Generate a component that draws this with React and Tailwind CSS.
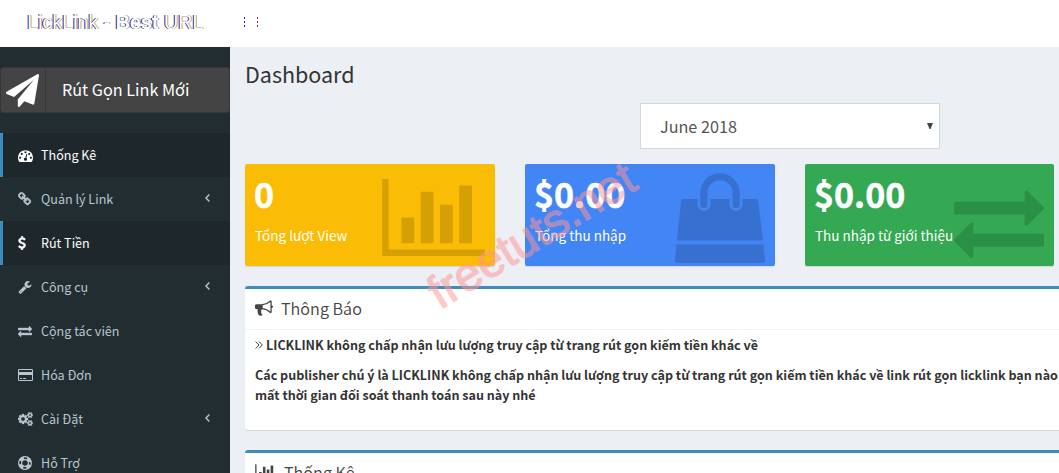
import React from "react";

const PLANE =
  "M1764 11q33 24 27 64l-256 1536q-5 29-32 45-14 8-31 8-11 0-24-5l-453-185-242 295q-18 23-49 23-13 0-22-4-19-7-30.5-23.5t-11.5-36.5v-349l864-1059-1069 925-395-162q-37-14-40-55-2-40 32-59l1664-960q15-9 32-9 20 0 36 11z";
const GAUGE =
  "M384 1152q0-53-37.5-90.5t-90.5-37.5-90.5 37.5-37.5 90.5 37.5 90.5 90.5 37.5 90.5-37.5 37.5-90.5zm192-448q0-53-37.5-90.5t-90.5-37.5-90.5 37.5-37.5 90.5 37.5 90.5 90.5 37.5 90.5-37.5 37.5-90.5zm428 481l101-382q6-26-7.5-48.5t-38.5-29.5-48 6.5-30 39.5l-101 382q-60 5-107 43.5t-63 98.5q-20 77 20 146t117 89 146-20 89-117q16-60-6-117t-72-91zm660-33q0-53-37.5-90.5t-90.5-37.5-90.5 37.5-37.5 90.5 37.5 90.5 90.5 37.5 90.5-37.5 37.5-90.5zm-640-640q0-53-37.5-90.5t-90.5-37.5-90.5 37.5-37.5 90.5 37.5 90.5 90.5 37.5 90.5-37.5 37.5-90.5zm448 192q0-53-37.5-90.5t-90.5-37.5-90.5 37.5-37.5 90.5 37.5 90.5 90.5 37.5 90.5-37.5 37.5-90.5zm320 448q0 261-141 483-19 29-54 29h-1402q-35 0-54-29-141-221-141-483 0-182 71-348t191-286 286-191 348-71 348 71 286 191 191 286 71 348z";
const CHAIN =
  "M1456 1216q0-40-28-68l-208-208q-28-28-68-28-42 0-72 32 3 3 19 18.5t21.5 21.5 15 19 13 25.5 3.5 27.5q0 40-28 68t-68 28q-15 0-27.5-3.5t-25.5-13-19-15-21.5-21.5-18.5-19q-33 31-33 73 0 40 28 68l206 207q27 27 68 27 40 0 68-26l147-146q28-28 28-67zm-703-705q0-40-28-68l-206-207q-28-28-68-28-39 0-68 27l-147 146q-28 28-28 67 0 40 28 68l208 208q27 27 68 27 42 0 72-31-3-3-19-18.5t-21.5-21.5-15-19-13-25.5-3.5-27.5q0-40 28-68t68-28q15 0 27.5 3.5t25.5 13 19 15 21.5 21.5 18.5 19q33-31 33-73zm895 705q0 120-85 203l-147 146q-83 83-203 83-121 0-204-85l-206-207q-83-83-83-203 0-123 88-209l-88-88q-86 88-208 88-120 0-204-84l-208-208q-84-84-84-204t85-203l147-146q83-83 203-83 121 0 204 85l206 207q83 83 83 203 0 123-88 209l88 88q86-88 208-88 120 0 204 84l208 208q84 84 84 204z";
const DOLLAR =
  "M1362 1185q0 153-99.5 263.5t-258.5 136.5v175q0 14-9 23t-23 9h-135q-13 0-22.5-9.5t-9.5-22.5v-175q-66-9-127.5-31t-101.5-44.5-74-48-46.5-37.5-17.5-18q-17-21-2-41l103-135q7-10 23-12 15-2 24 9l2 2q113 99 243 125 37 8 74 8 81 0 142.5-43t61.5-122q0-28-15-53t-33.5-42-58.5-37.5-66-32-80-32.5q-39-16-61.5-25t-61.5-26.5-62.5-31-56.5-35.5-53.5-42.5-43.5-49-35.5-58-21-66.5-8.5-78q0-138 98-242t255-134v-180q0-13 9.5-22.5t22.5-9.5h135q14 0 23 9t9 23v176q57 6 110.5 23t87 33.5 63.5 37.5 39 29 15 14q17 18 5 38l-81 146q-8 15-23 16-14 3-27-7-3-3-14.5-12t-39-26.5-58.5-32-74.5-26-85.5-11.5q-95 0-155 43t-60 111q0 26 8.500 48t29.500 41.500 39.500 33 56 31 60.500 27 70 27.500q53 20 81 31.500t76 35 75.500 42.500 62 50 53 63.500 31.500 76.500 13 94z";
const WRENCH =
  "M448 1472q0-26-19-45t-45-19-45 19-19 45 19 45 45 19 45-19 19-45zm644-420l-682 682q-37 37-90 37-52 0-91-37l-106-108q-38-36-38-90 0-53 38-91l681-681q39 98 114.5 173.5t173.5 114.5zm634-435q0 39-23 106-47 134-164.5 217.5t-258.5 83.5q-185 0-316.5-131.5t-131.5-316.5 131.5-316.5 316.5-131.5q58 0 121.500 16.500t107.500 46.500q16 11 16 28t-16 28l-293 169v224l193 107q5-3 79-48.500t135.500-81 70.500-35.500q15 0 23.500 10t8.500 25z";
const EXCHANGE =
  "M1792 1184v192q0 13-9.5 22.5t-22.5 9.5h-1376v192q0 13-9.5 22.5t-22.5 9.5q-12 0-24-10l-319-320q-9-9-9-22 0-14 9-23l320-320q9-9 23-9 13 0 22.5 9.5t9.5 22.5v192h1376q13 0 22.5 9.5t9.5 22.5zm0-544q0 14-9 23l-320 320q-9 9-23 9-13 0-22.5-9.5t-9.5-22.5v-192h-1376q-13 0-22.5-9.5t-9.5-22.5v-192q0-13 9.5-22.5t22.5-9.5h1376v-192q0-14 9-23t23-9q12 0 24 10l319 319q9 9 9 23z";
const COGS =
  "M896 896q0-106-75-181t-181-75-181 75-75 181 75 181 181 75 181-75 75-181zm768 512q0-52-38-90t-90-38-90 38-38 90q0 53 37.5 90.5t90.5 37.5 90.5-37.5 37.5-90.5zm0-1024q0-52-38-90t-90-38-90 38-38 90q0 53 37.5 90.5t90.5 37.5 90.5-37.5 37.5-90.5zm-384 421v185q0 10-7 19.5t-16 10.5l-155 24q-11 35-32 76 34 48 90 115 7 10 7 20 0 12-7 19-23 30-82.5 89.5t-78.5 59.5q-11 0-21-7l-115-90q-37 19-77 31-11 108-23 155-7 24-30 24h-186q-11 0-20-7.5t-10-17.5l-23-153q-34-10-75-31l-118 89q-7 7-20 7-11 0-21-8-144-133-144-160 0-9 7-19 10-14 41-53t47-61q-23-44-35-82l-152-24q-10-1-17-9.5t-7-19.5v-185q0-10 7-19.5t16-10.5l155-24q11-35 32-76-34-48-90-115-7-11-7-20 0-12 7-20 22-30 82-89t79-59q11 0 21 7l115 90q34-18 77-32 11-108 23-154 7-24 30-24h186q11 0 20 7.5t10 17.5l23 153q34 10 75 31l118-89q8-7 20-7 11 0 21 8 144 133 144 160 0 9-7 19-12 16-42 54t-45 60q23 48 34 82l152 23q10 2 17 10.5t7 19.5zm640 533v140q0 16-149 31-12 27-30 52 51 113 51 138 0 4-4 7-122 71-124 71-8 0-46-47t-52-68q-20 2-30 2t-30-2q-14 21-52 68t-46 47q-2 0-124-71-4-3-4-7 0-25 51-138-18-25-30-52-149-15-149-31v-140q0-16 149-31 13-29 30-52-51-113-51-138 0-4 4-7 4-2 35-20t59-34 30-16q8 0 46 46.5t52 67.5q20-2 30-2t30 2q51-71 92-112l6-2q4 0 124 70 4 3 4 7 0 25-51 138 17 23 30 52 149 15 149 31zm0-1024v140q0 16-149 31-12 27-30 52 51 113 51 138 0 4-4 7-122 71-124 71-8 0-46-47t-52-68q-20 2-30 2t-30-2q-14 21-52 68t-46 47q-2 0-124-71-4-3-4-7 0-25 51-138-18-25-30-52-149-15-149-31v-140q0-16 149-31 13-29 30-52-51-113-51-138 0-4 4-7 4-2 35-20t59-34 30-16q8 0 46 46.5t52 67.5q20-2 30-2t30 2q51-71 92-112l6-2q4 0 124 70 4 3 4 7 0 25-51 138 17 23 30 52 149 15 149 31z";
const BULLHORN =
  "M1664 640q53 0 90.5 37.5t37.5 90.5-37.5 90.5-90.5 37.5v384q0 52-38 90t-90 38q-417-347-812-380-58 19-91 66t-31 100.5 40 92.5q-20 33-23 65.5t6 58 33.5 55 48 50 61.5 50.5q-29 58-111.5 83t-168.5 11.5-132-55.5q-7-23-29.5-87.5t-32-94.5-23-89-15-101 3.5-98.5 22-110.5h-122q-66 0-113-47t-47-113v-192q0-66 47-113t113-47h480q435 0 896-384 52 0 90 38t38 90v384zm-128 604v-954q-394 302-768 343v270q377 42 768 341z";
const BARS =
  "M640 896v512h-256v-512h256zm384-512v1024h-256v-1024h256zm1024 1152v128h-2048v-1536h128v1408h1920zm-640-896v768h-256v-768h256zm384-384v1152h-256v-1152h256z";

function Glyph({ d, box = "0 0 1792 1792", className }) {
  return (
    <svg viewBox={box} className={className} fill="currentColor" aria-hidden="true">
      <path d={d} />
    </svg>
  );
}

const card = (
  <svg viewBox="0 0 15 14" className="h-[14px] w-[15px]" fill="currentColor">
    <path fillRule="evenodd" d="M1.3 1h12.4Q15 1 15 2.3v9.4q0 1.3-1.3 1.3H1.3Q0 13 0 11.7V2.3Q0 1 1.3 1zM1 2.3V4h13V2.3Q14 2 13.7 2H1.3Q1 2 1 2.3zM1 7v4.7q0 .3.3.3h12.4q.3 0 .3-.3V7z" />
    <path d="M2 10h2v1H2zM5 10h3v1H5zM1 4h13v3H1z" />
  </svg>
);
const ring = (
  <svg viewBox="0 0 14 14" className="h-[14px] w-[14px]" fill="none" stroke="currentColor">
    <circle cx="7" cy="7" r="6.4" strokeWidth="1.2" />
    <circle cx="7" cy="7" r="3.4" strokeWidth="1.2" />
    <circle cx="7" cy="7" r="4.9" strokeWidth="3.4" strokeDasharray="4.4 3.297" strokeDashoffset="-1.650" />
  </svg>
);
const fa = (d) => <Glyph d={d} className="h-[14px] w-[14px]" />;

const MENU = [
  { label: "Thống Kê", icon: <Glyph d={GAUGE} className="h-[15px] w-[15px]" />, active: true },
  { label: "Quản lý Link", icon: <Glyph d={CHAIN} className="h-[14px] w-[14px] stroke-current [stroke-width:70]" />, more: true },
  { label: "Rút Tiền", icon: <Glyph d={DOLLAR} box="384 0 1024 1792" className="h-[14px] w-2 stroke-current [stroke-width:50]" />, active: true },
  { label: "Công cụ", icon: fa(WRENCH), more: true },
  { label: "Cộng tác viên", icon: <Glyph d={EXCHANGE} className="h-[14px] w-[14px] stroke-current [stroke-width:50]" /> },
  { label: "Hóa Đơn", icon: card },
  { label: "Cài Đặt", icon: <Glyph d={COGS} box="0 0 1920 1792" className="h-[14px] w-[15px] stroke-current [stroke-width:40]" />, more: true },
  { label: "Hỗ Trợ", icon: ring },
];

function MenuItem({ label, icon, active, more }) {
  return (
    <li
      className={
        "flex h-11 items-center border-l-[3px] pl-[15px] pr-[20px] text-[12.550px] leading-5 " +
        (active ? "border-[#3c8dbc] bg-[#1e282c] text-white" : "border-transparent text-[#b8c7ce]")
      }
    >
      <span className="flex w-[23px] items-center">{icon}</span>
      <span className="grow">{label}</span>
      {more && (
        <svg viewBox="0 0 5 8" className="mb-0.5 h-[8px] w-[5px]" fill="none" stroke="currentColor" strokeWidth="1.4">
          <path d="M4.400 .5L1 4l3.400 3.500" />
        </svg>
      )}
    </li>
  );
}

const bag = (
  <svg viewBox="0 0 90 91" className="h-[91px] w-[90px]" fill="currentColor">
    <path d="M8 26h14.5v5.5a6.5 6.5 0 0 0 13 0V26h19v5.5a6.5 6.5 0 0 0 13 0V26H81q2 0 2.2 2L88 67.500H2L6 28q.2-2 2-2z" />
    <path d="M1.700 71.500h86.500L90 87.500q0 2.500-2.500 2.500h-85Q0 90 0 87.500z" />
    <path d="M28.800 31.500V20a16.200 16.200 0 0 1 32.400 0v11.500" fill="none" stroke="currentColor" strokeWidth="7" strokeLinecap="round" />
  </svg>
);

function Stat({ value, label, tone, children }) {
  return (
    <div className={"relative h-[102px] shrink-0 rounded-[2px] pl-[10px] pt-[9px] text-white shadow-[0_1px_1px_rgba(0,0,0,0.1)] " + tone}>
      <div className="-ml-px h-[42px] text-[34px] font-bold leading-[42px] [-webkit-text-stroke:0.5px_white]">{value}</div>
      <p className="mt-[10px] text-[13.5px] leading-[21px]">{label}</p>
      {children}
    </div>
  );
}

function Panel({ icon, title, children }) {
  return (
    <section className="w-[830px] rounded-[3px] border-t-[3px] border-[#3c8dbc] bg-white shadow-[0_1px_1px_rgba(0,0,0,0.1)]">
      <header className="flex h-[41px] items-center gap-2 border-b border-[#f4f4f4] px-[10px] pb-[3px] text-[#444]">
        {icon}
        <h3 className="text-[16.2px] font-[350] leading-5">{title}</h3>
      </header>
      {children}
    </section>
  );
}

export default function App() {
  return (
    <div className="relative h-[473px] w-[1059px] overflow-hidden bg-[#ecf0f5] font-['Noto_Sans_CJK_SC','Noto_Sans',sans-serif]">
      <header className="flex h-[47px] items-start bg-white">
        <div className="w-[230px] pl-[27px] pt-[10px] font-['Liberation_Sans',Arial,sans-serif] text-[20px] leading-6 tracking-[-0.14px] text-white [text-shadow:-1px_0_0_#1a1a90,1px_0_0_#c8a060]">
          <span className="whitespace-nowrap">
            LickLink - <b className="[text-shadow:-1px_0_0_#1a1a60,1px_0_0_#8090c0]">Best</b> URL
          </span>
        </div>
        <div className="flex gap-3 pl-[14px] pt-[17px]">
          <div className="flex flex-col gap-0.5">
            <i className="h-0.5 w-px bg-[#1d1dc0]" />
            <i className="h-0.5 w-px bg-[#1d1dc0]" />
            <i className="h-0.5 w-px bg-[#1d1dc0]" />
          </div>
          <div className="flex flex-col gap-0.5">
            <i className="h-0.5 w-px bg-[#a02848]" />
            <i className="h-0.5 w-px bg-[#a02848]" />
            <i className="h-0.5 w-px bg-[#a02848]" />
          </div>
        </div>
      </header>

      <div className="flex">
        <aside className="h-[426px] w-[230px] shrink-0 overflow-hidden bg-[#222d32] pt-5">
          <a className="flex h-[46px] items-stretch rounded-[3px] border border-[#383838] bg-[#444] text-white">
            <span className="flex w-[45px] items-center justify-center border-r border-[#383838] pr-0.5">
              <Glyph d={PLANE} className="h-[33px] w-[33px]" />
            </span>
            <span className="pl-4 text-[16.200px] leading-[43px]">Rút Gọn Link Mới</span>
          </a>
          <ul className="mt-5">
            {MENU.map((m) => (
              <MenuItem key={m.label} {...m} />
            ))}
          </ul>
        </aside>

        <main className="h-[426px] w-[829px] overflow-hidden pl-[15px]">
          <h1 className="mt-[14px] text-[21.500px] leading-[26px] text-[#333]">Dashboard</h1>
          <div className="ml-[395px] mt-4 flex h-[46px] w-[300px] items-center justify-between border border-[#d2d6de] bg-white pl-[19px] pr-[6px] text-[#555]">
            <span className="text-[16.2px] leading-6">June 2018</span>
            <svg viewBox="0 0 6 6" className="mb-px h-[6px] w-[6px]" fill="#444">
              <path d="M0 0h6L3.500 6h-1z" />
            </svg>
          </div>

          <div className="mt-[15px] flex gap-[30px]">
            <Stat value="0" label="Tổng lượt View" tone="w-[250px] bg-[#fbbc05]">
              <Glyph d={BARS} box="0 128 2048 1536" className="absolute left-[137px] top-[15px] h-[77px] w-[103px] text-black/15" />
            </Stat>
            <Stat value="$0.00" label="Tổng thu nhập" tone="w-[250px] bg-[#4285f4]">
              <div className="absolute left-[150px] top-[9px] text-black opacity-15">{bag}</div>
            </Stat>
            <Stat value="$0.00" label="Thu nhập từ giới thiệu" tone="w-[249px] bg-[#34a853]">
              <Glyph d={EXCHANGE} className="absolute left-[149px] top-[12px] h-[90px] w-[90px] text-black/15" />
            </Stat>
          </div>

          <div className="mt-5 flex flex-col gap-5">
            <Panel icon={<Glyph d={BULLHORN} className="h-[18px] w-[18px]" />} title="Thông Báo">
              <div className="h-[100px] whitespace-nowrap px-[10px] pt-[5px] text-[12.550px] font-bold leading-5 text-[#333]">
                <p className="flex items-center gap-[3px]">
                  <svg viewBox="0 0 8 8" className="h-2 w-2" fill="none" stroke="#444" strokeWidth="1">
                    <path d="M.6.5L4 4 .6 7.500M4 .5L7.400 4 4 7.500" />
                  </svg>
                  LICKLINK không chấp nhận lưu lượng truy cập từ trang rút gọn kiếm tiền khác về
                </p>
                <p className="mt-[10px]">
                  Các publisher chú ý là LICKLINK không chấp nhận lưu lượng truy cập từ trang rút gọn kiếm tiền khác về link rút gọn licklink bạn nào
                  <br />
                  mất thời gian đối soát thanh toán sau này nhé
                </p>
              </div>
            </Panel>
            <Panel icon={<Glyph d={BARS} box="0 0 2048 1792" className="h-[18px] w-[21px]" />} title="Thống Kê">
              <div className="h-10" />
            </Panel>
          </div>
        </main>
      </div>

      <svg viewBox="0 0 1059 473" className="pointer-events-none absolute left-0 top-0 h-[473px] w-[1059px]">
        <text
          transform="translate(440 310) rotate(-31.500)"
          fontFamily="Liberation Sans, Arial, sans-serif"
          fontSize="47"
          textLength="234"
          fill="#ff9698"
          stroke="#ff9698"
          strokeWidth="1.300"
          strokeLinejoin="round"
          opacity="0.52"
        >
          freetuts.net
        </text>
      </svg>
    </div>
  );
}
